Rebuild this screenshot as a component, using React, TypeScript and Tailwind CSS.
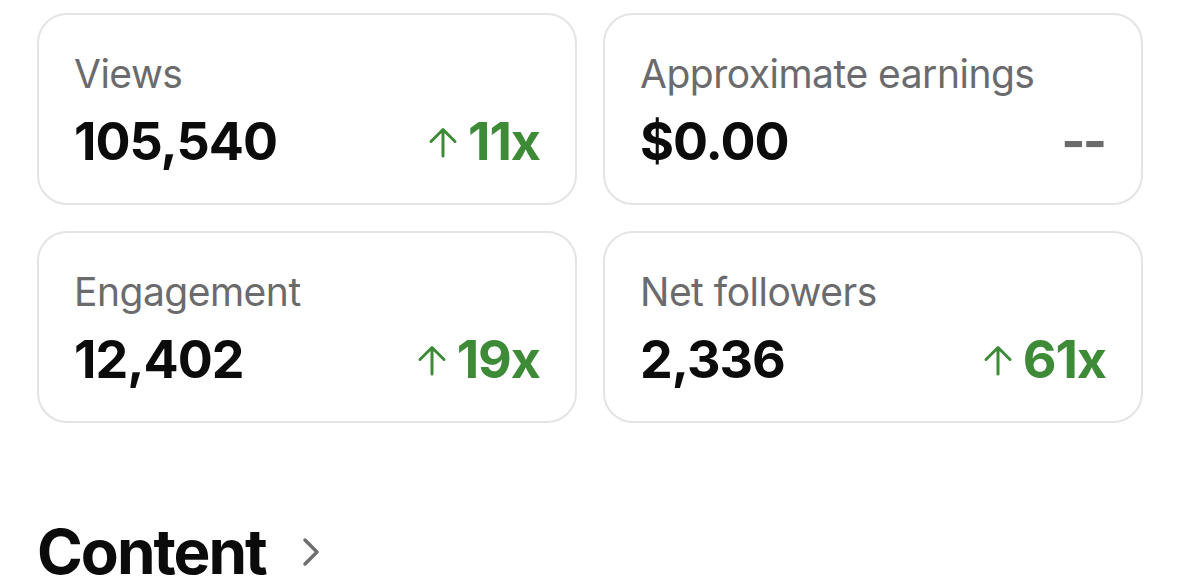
import React from 'react';

type Stat = {
  label: string;
  value: string;
  change: string | null;
};

const stats: Stat[] = [
  { label: 'Views', value: '105,540', change: '11x' },
  { label: 'Approximate earnings', value: '$0.00', change: null },
  { label: 'Engagement', value: '12,402', change: '19x' },
  { label: 'Net followers', value: '2,336', change: '61x' },
];

const ArrowUp = () => (
  <svg width="30" height="31" viewBox="0 0 30 31" fill="none" className="shrink-0">
    <path
      d="M15 3 L15 29 M3 14.5 L15 2.5 L27 14.5"
      stroke="#3d8a37"
      strokeWidth="3"
      strokeLinecap="round"
      strokeLinejoin="round"
    />
  </svg>
);

const StatCard: React.FC<{ stat: Stat }> = ({ stat }) => (
  <div className="h-[192px] rounded-[30px] border-2 border-[#e4e4e6] bg-white pt-[39px] pl-[35px] pr-[35px]">
    <div className="text-[39px] leading-[40px] tracking-[-0.5px] text-[#6b6b6e]">{stat.label}</div>
    <div className="mt-[20px] flex items-center justify-between h-[56px]">
      <span className="text-[52px] leading-[56px] font-bold tracking-[-1px] text-[#0b0b0b]">{stat.value}</span>
      {stat.change ? (
        <span className="flex items-center gap-[10px]">
          <ArrowUp />
          <span className="text-[52px] leading-[56px] font-bold tracking-[-1px] text-[#3d8a37]">{stat.change}</span>
        </span>
      ) : (
        <span className="text-[52px] leading-[56px] font-bold text-[#6b6b6e] tracking-[-3px] pr-[2px]">--</span>
      )}
    </div>
  </div>
);

export default function App() {
  return (
    <div className="min-h-[587px] w-full bg-white pl-[37px] pr-[36px] pt-[13px] font-['Inter',sans-serif] overflow-hidden">
      <div className="grid grid-cols-2 gap-[26px]">
        {stats.map((s) => (
          <StatCard key={s.label} stat={s} />
        ))}
      </div>
      <div className="mt-[98px] flex items-center gap-[36px]">
        <h2 className="text-[62px] leading-[62px] font-bold tracking-[-2px] text-[#0b0b0b]">Content</h2>
        <svg width="18" height="30" viewBox="0 0 18 30" fill="none">
          <path
            d="M3 3 L15 15 L3 27"
            stroke="#6e6e70"
            strokeWidth="3.5"
            strokeLinecap="round"
            strokeLinejoin="round"
          />
        </svg>
      </div>
    </div>
  );
}
